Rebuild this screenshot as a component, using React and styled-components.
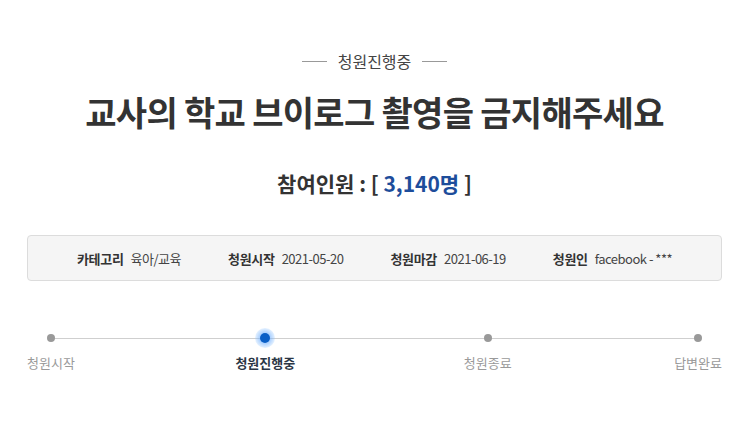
import React from "react";
import styled, { createGlobalStyle } from "styled-components";

const GlobalStyle = createGlobalStyle`
  body {
    margin: 0;
    background: #fff;
    font-family: "Noto Sans CJK KR", "Noto Sans", sans-serif;
  }
`;

const Page = styled.div`
  padding: 0 23px 0 27px;
`;

const Status = styled.div`
  display: flex;
  align-items: center;
  justify-content: center;
  gap: 11px;
  padding-top: 47px;
  font-size: 16px;
  line-height: 28px;
  color: #444;

  &::before,
  &::after {
    content: "";
    width: 25px;
    height: 1px;
    background: #999;
  }
`;

const Title = styled.h1`
  margin: 15px 0 0;
  text-align: center;
  font-size: 34px;
  line-height: 44px;
  font-weight: 700;
  color: #333;
  letter-spacing: -0.7px;
`;

const Count = styled.div`
  margin-top: 34px;
  text-align: center;
  font-size: 21px;
  line-height: 30px;
  font-weight: 700;
  color: #333;
`;

const Num = styled.span`
  color: #1d4d9b;
`;

const InfoBox = styled.ul`
  list-style: none;
  margin: 37px 0 0;
  padding: 0;
  height: 46px;
  box-sizing: border-box;
  display: flex;
  align-items: center;
  justify-content: center;
  gap: 47px;
  background: #f5f5f5;
  border: 1px solid #dcdcdc;
  border-radius: 4px;
  font-size: 13px;
`;

const Item = styled.li`
  display: flex;
  align-items: center;
  gap: 7px;
`;

const Label = styled.span`
  font-weight: 700;
  color: #333;
  letter-spacing: -0.3px;
`;

const Value = styled.span`
  color: #444;
  letter-spacing: -0.5px;
`;

const Steps = styled.ol`
  position: relative;
  list-style: none;
  margin: 47px 0 0;
  padding: 0;
  display: flex;
  justify-content: space-between;

  &::before {
    content: "";
    position: absolute;
    top: 10px;
    left: 23px;
    right: 22px;
    height: 1px;
    background: #cfcfcf;
  }
`;

const Step = styled.li`
  position: relative;
  display: flex;
  flex-direction: column;
  align-items: center;
  gap: 5px;
  margin: ${(p) => p.$margin || "0"};
  font-size: 13px;
  line-height: 20px;
  color: ${(p) => (p.$active ? "#2b3645" : "#9a9a9a")};
  font-weight: ${(p) => (p.$active ? 700 : 400)};
`;

const Dot = styled.span`
  width: 20px;
  height: 20px;
  display: flex;
  align-items: center;
  justify-content: center;
  border-radius: 50%;
  background: ${(p) =>
    p.$active
      ? "radial-gradient(circle, rgba(110,175,255,0.55) 40%, rgba(150,200,255,0.25) 70%, rgba(255,255,255,0) 100%)"
      : "transparent"};

  &::after {
    content: "";
    width: ${(p) => (p.$active ? "10px" : "8px")};
    height: ${(p) => (p.$active ? "10px" : "8px")};
    border-radius: 50%;
    background: ${(p) => (p.$active ? "#0a5fc6" : "#999")};
  }
`;

const info = [
  ["카테고리", "육아/교육"],
  ["청원시작", "2021-05-20"],
  ["청원마감", "2021-06-19"],
  ["청원인", "facebook - ***"],
];

const steps = [
  { label: "청원시작" },
  { label: "청원진행중", active: true, margin: "0 0 0 -8px" },
  { label: "청원종료", margin: "0 -6px 0 0" },
  { label: "답변완료" },
];

export default function App() {
  return (
    <Page>
      <GlobalStyle />
      <Status>청원진행중</Status>
      <Title>교사의 학교 브이로그 촬영을 금지해주세요</Title>
      <Count>
        참여인원 : [ <Num>3,140명</Num> ]
      </Count>
      <InfoBox>
        {info.map(([k, v]) => (
          <Item key={k}>
            <Label>{k}</Label>
            <Value>{v}</Value>
          </Item>
        ))}
      </InfoBox>
      <Steps>
        {steps.map((s) => (
          <Step key={s.label} $active={s.active} $margin={s.margin}>
            <Dot $active={s.active} />
            {s.label}
          </Step>
        ))}
      </Steps>
    </Page>
  );
}
